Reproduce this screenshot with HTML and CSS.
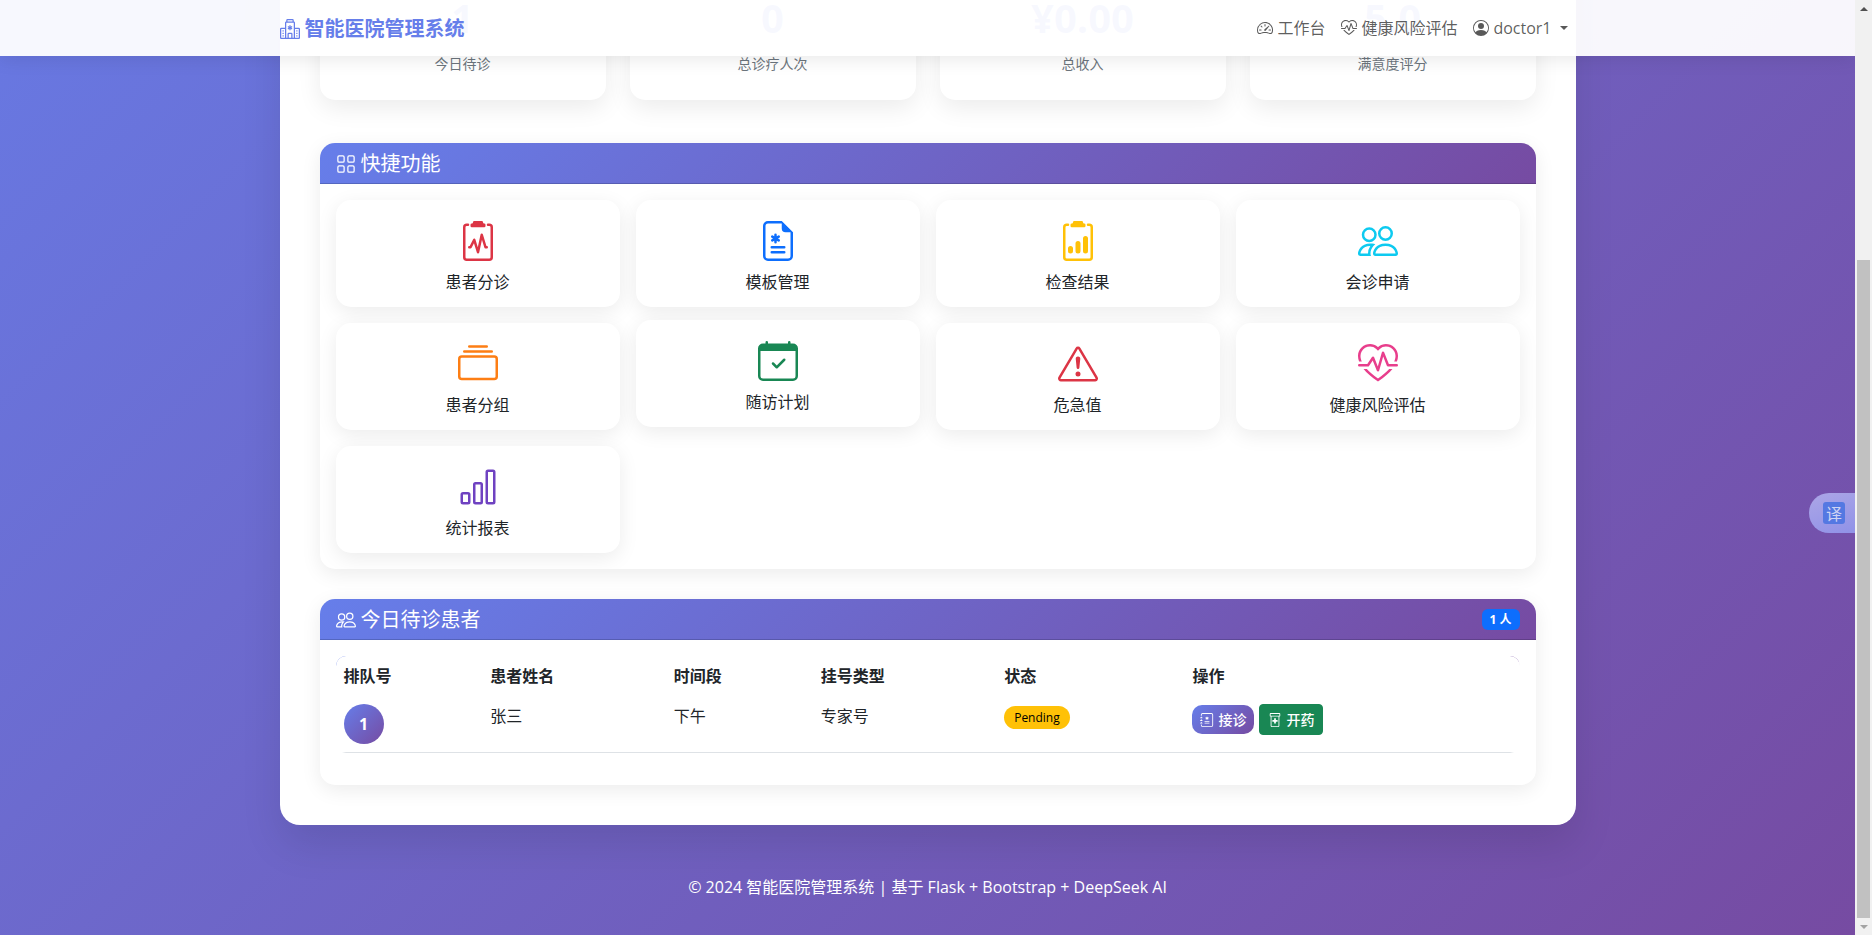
FILE: index.html
```
<!DOCTYPE html>
<html lang="zh-CN">
<head>
    <meta charset="UTF-8">
    <meta name="viewport" content="width=device-width, initial-scale=1.0">
    <title>医生工作台 - 智能医院管理系统</title>
    <link rel="stylesheet" href="styles.css">
</head>
<body>
    <!-- 重复使用的图标 -->
    <svg class="icon-defs" aria-hidden="true">
        <symbol id="icon-people" viewBox="0 0 16 16">
            <path d="M15 14s1 0 1-1-1-4-5-4-5 3-5 4 1 1 1 1zm-7.978-1L7 12.996c.001-.264.167-1.03.76-1.72C8.312 10.629 9.282 10 11 10c1.717 0 2.687.63 3.24 1.276.593.69.758 1.457.76 1.72l-.008.002-.014.002zM11 7a2 2 0 1 0 0-4 2 2 0 0 0 0 4m3-2a3 3 0 1 1-6 0 3 3 0 0 1 6 0M6.936 9.28a6 6 0 0 0-1.23-.247A7 7 0 0 0 5 9c-4 0-5 3-5 4q0 1 1 1h4.216A2.24 2.24 0 0 1 5 13c0-1.01.377-2.042 1.09-2.904.243-.294.526-.569.846-.816M4.92 10A5.5 5.5 0 0 0 4 13H1c0-.26.164-1.03.76-1.724.545-.636 1.492-1.256 3.16-1.275ZM1.5 5.5a3 3 0 1 1 6 0 3 3 0 0 1-6 0m3-2a2 2 0 1 0 0 4 2 2 0 0 0 0-4"/>
        </symbol>
        <symbol id="icon-heart-pulse" viewBox="0 0 16 16">
            <path d="m8 2.748-.717-.737C5.6.281 2.514.878 1.4 3.053.918 3.995.78 5.323 1.508 7H.43c-2.128-5.697 4.165-8.83 7.394-5.857q.09.083.176.171a3 3 0 0 1 .176-.17c3.23-2.974 9.522.159 7.394 5.856h-1.078c.728-1.677.59-3.005.108-3.947C13.486.878 10.4.28 8.717 2.01zM2.212 10h1.315C4.593 11.183 6.05 12.458 8 13.795c1.949-1.337 3.407-2.612 4.473-3.795h1.315c-1.265 1.566-3.14 3.25-5.788 5-2.648-1.75-4.523-3.434-5.788-5"/>
            <path d="M10.464 3.314a.5.5 0 0 0-.945.049L7.921 8.956 6.464 5.314a.5.5 0 0 0-.88-.091L3.732 8H.5a.5.5 0 0 0 0 1H4a.5.5 0 0 0 .416-.223l1.473-2.209 1.647 4.118a.5.5 0 0 0 .945-.049l1.598-5.593 1.457 3.642A.5.5 0 0 0 12 9h3.5a.5.5 0 0 0 0-1h-3.162z"/>
        </symbol>
        <symbol id="icon-clipboard" viewBox="0 0 16 16">
            <path d="M9.5 0a.5.5 0 0 1 .5.5.5.5 0 0 0 .5.5.5.5 0 0 1 .5.5V2a.5.5 0 0 1-.5.5h-5A.5.5 0 0 1 5 2v-.5a.5.5 0 0 1 .5-.5.5.5 0 0 0 .5-.5.5.5 0 0 1 .5-.5z"/>
            <path d="M3 2.5a.5.5 0 0 1 .5-.5H4a.5.5 0 0 0 0-1h-.5A1.5 1.5 0 0 0 2 2.5v12A1.5 1.5 0 0 0 3.5 16h9a1.5 1.5 0 0 0 1.5-1.5v-12A1.5 1.5 0 0 0 12.5 1H12a.5.5 0 0 0 0 1h.5a.5.5 0 0 1 .5.5v12a.5.5 0 0 1-.5.5h-9a.5.5 0 0 1-.5-.5z"/>
        </symbol>
    </svg>

    <div class="viewport">
        <nav class="navbar">
            <div class="container navbar-inner">
                <a class="navbar-brand" href="#">
                    <svg class="icon" viewBox="0 0 16 16"><path d="M8.5 5.034v1.1l.953-.55.5.867L9 7l.953.55-.5.866-.953-.55v1.1h-1v-1.1l-.953.55-.5-.866L7 7l-.953-.55.5-.866.953.55v-1.1zM13.25 9a.25.25 0 0 0-.25.25v.5c0 .138.112.25.25.25h.5a.25.25 0 0 0 .25-.25v-.5a.25.25 0 0 0-.25-.25zM13 11.25a.25.25 0 0 1 .25-.25h.5a.25.25 0 0 1 .25.25v.5a.25.25 0 0 1-.25.25h-.5a.25.25 0 0 1-.25-.25zm.25 1.75a.25.25 0 0 0-.25.25v.5c0 .138.112.25.25.25h.5a.25.25 0 0 0 .25-.25v-.5a.25.25 0 0 0-.25-.25zm-11-4a.25.25 0 0 0-.25.25v.5c0 .138.112.25.25.25h.5A.25.25 0 0 0 3 9.75v-.5A.25.25 0 0 0 2.75 9zm0 2a.25.25 0 0 0-.25.25v.5c0 .138.112.25.25.25h.5a.25.25 0 0 0 .25-.25v-.5a.25.25 0 0 0-.25-.25zM2 13.25a.25.25 0 0 1 .25-.25h.5a.25.25 0 0 1 .25.25v.5a.25.25 0 0 1-.25.25h-.5a.25.25 0 0 1-.25-.25z"/><path d="M5 1a1 1 0 0 1 1-1h4a1 1 0 0 1 1 1v1a1 1 0 0 1 1 1v4h3a1 1 0 0 1 1 1v7a1 1 0 0 1-1 1H1a1 1 0 0 1-1-1V8a1 1 0 0 1 1-1h3V3a1 1 0 0 1 1-1zm2 14h2v-3H7zm3 0h1V3H5v12h1v-3a1 1 0 0 1 1-1h2a1 1 0 0 1 1 1zm0-14H6v1h4zm2 7v7h3V8zm-8 7V8H1v7z"/></svg>
                    智能医院管理系统
                </a>
                <div class="navbar-nav">
                    <a class="nav-link" href="#">
                        <svg class="icon" viewBox="0 0 16 16"><path d="M8 4a.5.5 0 0 1 .5.5V6a.5.5 0 0 1-1 0V4.5A.5.5 0 0 1 8 4M3.732 5.732a.5.5 0 0 1 .707 0l.915.914a.5.5 0 1 1-.708.708l-.914-.915a.5.5 0 0 1 0-.707M2 10a.5.5 0 0 1 .5-.5h1.586a.5.5 0 0 1 0 1H2.5A.5.5 0 0 1 2 10m9.5 0a.5.5 0 0 1 .5-.5h1.5a.5.5 0 0 1 0 1H12a.5.5 0 0 1-.5-.5m.754-4.246a.39.39 0 0 0-.527-.02L7.547 9.31a.91.91 0 1 0 1.302 1.258l3.434-4.297a.39.39 0 0 0-.029-.518z"/><path fill-rule="evenodd" d="M0 10a8 8 0 1 1 15.547 2.661c-.442 1.253-1.845 1.602-2.932 1.25C11.309 13.488 9.475 13 8 13c-1.474 0-3.31.488-4.615.911-1.087.352-2.49.003-2.932-1.25A8 8 0 0 1 0 10m8-7a7 7 0 0 0-6.603 9.329c.203.575.923.876 1.68.63C4.397 12.533 6.358 12 8 12s3.604.532 4.923.96c.757.245 1.477-.056 1.68-.631A7 7 0 0 0 8 3"/></svg>
                        工作台
                    </a>
                    <a class="nav-link" href="#">
                        <svg class="icon"><use href="#icon-heart-pulse"/></svg>
                        健康风险评估
                    </a>
                    <a class="nav-link dropdown-toggle" href="#">
                        <svg class="icon" viewBox="0 0 16 16"><path d="M11 6a3 3 0 1 1-6 0 3 3 0 0 1 6 0"/><path fill-rule="evenodd" d="M0 8a8 8 0 1 1 16 0A8 8 0 0 1 0 8m8-7a7 7 0 0 0-5.468 11.37C3.242 11.226 4.805 10 8 10s4.757 1.225 5.468 2.37A7 7 0 0 0 8 1"/></svg>
                        doctor1
                    </a>
                </div>
            </div>
        </nav>

        <main class="container main-container">
            <div class="stats">
                <div class="stat-card">
                    <div class="stat-number">1</div>
                    <div class="stat-label">今日待诊</div>
                </div>
                <div class="stat-card">
                    <div class="stat-number">0</div>
                    <div class="stat-label">总诊疗人次</div>
                </div>
                <div class="stat-card">
                    <div class="stat-number">¥0.00</div>
                    <div class="stat-label">总收入</div>
                </div>
                <div class="stat-card">
                    <div class="stat-number">5.0</div>
                    <div class="stat-label">满意度评分</div>
                </div>
            </div>

            <section class="card">
                <div class="card-header">
                    <h5>
                        <svg class="icon" viewBox="0 0 16 16"><path d="M1 2.5A1.5 1.5 0 0 1 2.5 1h3A1.5 1.5 0 0 1 7 2.5v3A1.5 1.5 0 0 1 5.5 7h-3A1.5 1.5 0 0 1 1 5.5zM2.5 2a.5.5 0 0 0-.5.5v3a.5.5 0 0 0 .5.5h3a.5.5 0 0 0 .5-.5v-3a.5.5 0 0 0-.5-.5zm6.5.5A1.5 1.5 0 0 1 10.5 1h3A1.5 1.5 0 0 1 15 2.5v3A1.5 1.5 0 0 1 13.5 7h-3A1.5 1.5 0 0 1 9 5.5zm1.5-.5a.5.5 0 0 0-.5.5v3a.5.5 0 0 0 .5.5h3a.5.5 0 0 0 .5-.5v-3a.5.5 0 0 0-.5-.5zM1 10.5A1.5 1.5 0 0 1 2.5 9h3A1.5 1.5 0 0 1 7 10.5v3A1.5 1.5 0 0 1 5.5 15h-3A1.5 1.5 0 0 1 1 13.5zm1.5-.5a.5.5 0 0 0-.5.5v3a.5.5 0 0 0 .5.5h3a.5.5 0 0 0 .5-.5v-3a.5.5 0 0 0-.5-.5zm6.5.5A1.5 1.5 0 0 1 10.5 9h3a1.5 1.5 0 0 1 1.5 1.5v3a1.5 1.5 0 0 1-1.5 1.5h-3A1.5 1.5 0 0 1 9 13.5zm1.5-.5a.5.5 0 0 0-.5.5v3a.5.5 0 0 0 .5.5h3a.5.5 0 0 0 .5-.5v-3a.5.5 0 0 0-.5-.5z"/></svg>
                        快捷功能
                    </h5>
                </div>
                <div class="card-body quick-grid">
                    <a class="quick-card" href="#">
                        <svg class="quick-icon red" viewBox="0 0 16 16"><use href="#icon-clipboard"/><path d="M9.979 5.356a.5.5 0 0 0-.968.04L7.92 10.49l-.94-3.135a.5.5 0 0 0-.926-.08L4.69 10H4.5a.5.5 0 0 0 0 1H5a.5.5 0 0 0 .447-.276l.936-1.873 1.138 3.793a.5.5 0 0 0 .968-.04L9.58 7.51l.94 3.135A.5.5 0 0 0 11 11h.5a.5.5 0 0 0 0-1h-.128z"/></svg>
                        <span>患者分诊</span>
                    </a>
                    <a class="quick-card" href="#">
                        <svg class="quick-icon blue" viewBox="0 0 16 16"><path d="M7.5 5.5a.5.5 0 0 0-1 0v.634l-.549-.317a.5.5 0 1 0-.5.866L6 7l-.549.317a.5.5 0 1 0 .5.866l.549-.317V8.5a.5.5 0 1 0 1 0v-.634l.549.317a.5.5 0 1 0 .5-.866L8 7l.549-.317a.5.5 0 1 0-.5-.866l-.549.317zm-2 4.5a.5.5 0 0 0 0 1h5a.5.5 0 0 0 0-1zm0 2a.5.5 0 0 0 0 1h5a.5.5 0 0 0 0-1z"/><path d="M14 14V4.5L9.5 0H4a2 2 0 0 0-2 2v12a2 2 0 0 0 2 2h8a2 2 0 0 0 2-2M9.5 3A1.5 1.5 0 0 0 11 4.5h2V14a1 1 0 0 1-1 1H4a1 1 0 0 1-1-1V2a1 1 0 0 1 1-1h5.5z"/></svg>
                        <span>模板管理</span>
                    </a>
                    <a class="quick-card" href="#">
                        <svg class="quick-icon yellow" viewBox="0 0 16 16"><use href="#icon-clipboard"/><path d="M10 7a1 1 0 1 1 2 0v5a1 1 0 1 1-2 0zm-6 4a1 1 0 1 1 2 0v1a1 1 0 1 1-2 0zm4-3a1 1 0 0 0-1 1v3a1 1 0 1 0 2 0V9a1 1 0 0 0-1-1"/></svg>
                        <span>检查结果</span>
                    </a>
                    <a class="quick-card" href="#">
                        <svg class="quick-icon cyan"><use href="#icon-people"/></svg>
                        <span>会诊申请</span>
                    </a>
                    <a class="quick-card" href="#">
                        <svg class="quick-icon orange" viewBox="0 0 16 16"><path d="M2.5 3.5a.5.5 0 0 1 0-1h11a.5.5 0 0 1 0 1zm2-2a.5.5 0 0 1 0-1h7a.5.5 0 0 1 0 1zM0 13a1.5 1.5 0 0 0 1.5 1.5h13A1.5 1.5 0 0 0 16 13V6a1.5 1.5 0 0 0-1.5-1.5h-13A1.5 1.5 0 0 0 0 6zm1.5.5A.5.5 0 0 1 1 13V6a.5.5 0 0 1 .5-.5h13a.5.5 0 0 1 .5.5v7a.5.5 0 0 1-.5.5z"/></svg>
                        <span>患者分组</span>
                    </a>
                    <a class="quick-card hover" href="#">
                        <svg class="quick-icon green" viewBox="0 0 16 16"><path d="M10.854 7.146a.5.5 0 0 1 0 .708l-3 3a.5.5 0 0 1-.708 0l-1.5-1.5a.5.5 0 1 1 .708-.708L7.5 9.793l2.646-2.647a.5.5 0 0 1 .708 0"/><path d="M3.5 0a.5.5 0 0 1 .5.5V1h8V.5a.5.5 0 0 1 1 0V1h1a2 2 0 0 1 2 2v11a2 2 0 0 1-2 2H2a2 2 0 0 1-2-2V3a2 2 0 0 1 2-2h1V.5a.5.5 0 0 1 .5-.5M1 4v10a1 1 0 0 0 1 1h12a1 1 0 0 0 1-1V4z"/></svg>
                        <span>随访计划</span>
                    </a>
                    <a class="quick-card" href="#">
                        <svg class="quick-icon red" viewBox="0 0 16 16"><path d="M7.938 2.016A.13.13 0 0 1 8.002 2a.13.13 0 0 1 .063.016.15.15 0 0 1 .054.057l6.857 11.667c.036.06.035.124.002.183a.2.2 0 0 1-.054.06.1.1 0 0 1-.066.017H1.146a.1.1 0 0 1-.066-.017.2.2 0 0 1-.054-.06.18.18 0 0 1 .002-.183L7.884 2.073a.15.15 0 0 1 .054-.057m1.044-.45a1.13 1.13 0 0 0-1.96 0L.165 13.233c-.457.778.091 1.767.98 1.767h13.713c.889 0 1.438-.99.98-1.767z"/><path d="M7.002 12a1 1 0 1 1 2 0 1 1 0 0 1-2 0M7.1 5.995a.905.905 0 1 1 1.8 0l-.35 3.507a.552.552 0 0 1-1.1 0z"/></svg>
                        <span>危急值</span>
                    </a>
                    <a class="quick-card" href="#">
                        <svg class="quick-icon pink"><use href="#icon-heart-pulse"/></svg>
                        <span>健康风险评估</span>
                    </a>
                    <a class="quick-card" href="#">
                        <svg class="quick-icon purple" viewBox="0 0 16 16"><path d="M4 11H2v3h2zm5-4H7v7h2zm5-5v12h-2V2zm-2-1a1 1 0 0 0-1 1v12a1 1 0 0 0 1 1h2a1 1 0 0 0 1-1V2a1 1 0 0 0-1-1zM6 7a1 1 0 0 1 1-1h2a1 1 0 0 1 1 1v7a1 1 0 0 1-1 1H7a1 1 0 0 1-1-1zm-5 4a1 1 0 0 1 1-1h2a1 1 0 0 1 1 1v3a1 1 0 0 1-1 1H2a1 1 0 0 1-1-1z"/></svg>
                        <span>统计报表</span>
                    </a>
                </div>
            </section>

            <section class="card">
                <div class="card-header">
                    <h5>
                        <svg class="icon"><use href="#icon-people"/></svg>
                        今日待诊患者
                    </h5>
                    <span class="badge">1 人</span>
                </div>
                <div class="card-body">
                    <table class="table">
                        <colgroup>
                            <col class="col-narrow">
                            <col class="col-wide">
                            <col class="col-narrow">
                            <col class="col-wide">
                            <col class="col-status">
                            <col>
                        </colgroup>
                        <thead>
                            <tr>
                                <th>排队号</th>
                                <th>患者姓名</th>
                                <th>时间段</th>
                                <th>挂号类型</th>
                                <th>状态</th>
                                <th>操作</th>
                            </tr>
                        </thead>
                        <tbody>
                            <tr>
                                <td><div class="queue-number">1</div></td>
                                <td>张三</td>
                                <td>下午</td>
                                <td>专家号</td>
                                <td><span class="status-badge">Pending</span></td>
                                <td>
                                    <div class="actions">
                                        <button type="button" class="btn btn-primary">
                                            <svg class="icon" viewBox="0 0 16 16"><path d="M8 4a.5.5 0 0 1 .5.5v.634l.549-.317a.5.5 0 1 1 .5.866L9 6l.549.317a.5.5 0 1 1-.5.866L8.5 6.866V7.5a.5.5 0 0 1-1 0v-.634l-.549.317a.5.5 0 1 1-.5-.866L7 6l-.549-.317a.5.5 0 0 1 .5-.866l.549.317V4.5A.5.5 0 0 1 8 4M5 9.5a.5.5 0 0 1 .5-.5h5a.5.5 0 0 1 0 1h-5a.5.5 0 0 1-.5-.5m0 2a.5.5 0 0 1 .5-.5h5a.5.5 0 0 1 0 1h-5a.5.5 0 0 1-.5-.5"/><path d="M3 0h10a2 2 0 0 1 2 2v12a2 2 0 0 1-2 2H3a2 2 0 0 1-2-2v-1h1v1a1 1 0 0 0 1 1h10a1 1 0 0 0 1-1V2a1 1 0 0 0-1-1H3a1 1 0 0 0-1 1v1H1V2a2 2 0 0 1 2-2"/><path d="M1 5v-.5a.5.5 0 0 1 1 0V5h.5a.5.5 0 0 1 0 1h-2a.5.5 0 0 1 0-1zm0 3v-.5a.5.5 0 0 1 1 0V8h.5a.5.5 0 0 1 0 1h-2a.5.5 0 0 1 0-1zm0 3v-.5a.5.5 0 0 1 1 0v.5h.5a.5.5 0 0 1 0 1h-2a.5.5 0 0 1 0-1z"/></svg>
                                            接诊
                                        </button>
                                        <button type="button" class="btn btn-success">
                                            <svg class="icon" viewBox="0 0 16 16"><path d="M7 6h2v2h2v2H9v2H7v-2H5V8h2z"/><path d="M2 1a1 1 0 0 1 1-1h10a1 1 0 0 1 1 1v2a1 1 0 0 1-1 1v10.5a1.5 1.5 0 0 1-1.5 1.5h-7A1.5 1.5 0 0 1 3 14.5V4a1 1 0 0 1-1-1zm2 3v10.5a.5.5 0 0 0 .5.5h7a.5.5 0 0 0 .5-.5V4zM3 3h10V1H3z"/></svg>
                                            开药
                                        </button>
                                    </div>
                                </td>
                            </tr>
                        </tbody>
                    </table>
                </div>
            </section>
        </main>

        <footer class="footer">
            <p>© 2024 智能医院管理系统 | 基于 Flask + Bootstrap + DeepSeek AI</p>
        </footer>

        <button type="button" class="translate-btn"><span>译</span></button>
    </div>

    <div class="scrollbar" aria-hidden="true">
        <div class="scroll-arrow up"></div>
        <div class="scroll-track">
            <div class="scroll-thumb"></div>
        </div>
        <div class="scroll-arrow down"></div>
    </div>
</body>
</html>
```
FILE: styles.css
```
* {
    box-sizing: border-box;
}
body {
    margin: 0;
    height: 100vh;
    display: flex;
    overflow: hidden;
    font-family: "Open Sans", "Noto Sans CJK SC", sans-serif;
    font-size: 16px;
    line-height: 24px;
    color: #212529;
}
a {
    color: inherit;
    text-decoration: none;
}
.icon-defs {
    display: none;
}
.icon {
    width: 1em;
    height: 1em;
    fill: currentColor;
    flex: none;
}

/* 页面区域，停在底部 */
.viewport {
    position: relative;
    flex: 1;
    min-width: 0;
    display: flex;
    flex-direction: column;
    justify-content: flex-end;
    overflow: hidden;
    background: linear-gradient(135deg, #667eea 0%, #764ba2 100%) bottom / 100% 137vh;
}
.container {
    width: calc(100% - 24px);
    max-width: 1296px;
    margin: 0 auto;
}

/* 导航栏 */
.navbar {
    position: absolute;
    top: 0;
    left: 0;
    right: 0;
    z-index: 10;
    background: rgba(255, 255, 255, 0.95);
    box-shadow: 0 2px 20px rgba(0, 0, 0, 0.1);
}
.navbar-inner {
    height: 56px;
    display: flex;
    align-items: center;
    justify-content: space-between;
}
.navbar-brand {
    display: flex;
    align-items: center;
    gap: 5px;
    padding-top: 2px;
    font-size: 20px;
    font-weight: bold;
    color: #667eea;
}
.navbar-nav {
    display: flex;
}
.nav-link {
    display: flex;
    align-items: center;
    gap: 4px;
    padding: 8px;
    color: rgba(0, 0, 0, 0.65);
}
.dropdown-toggle::after {
    content: "";
    margin-left: 4px;
    border-top: 4px solid;
    border-left: 4px solid transparent;
    border-right: 4px solid transparent;
}

/* 主内容 */
.main-container {
    flex: none;
    margin-bottom: 30px;
    padding: 40px;
    background: #fff;
    border-radius: 20px;
    box-shadow: 0 20px 40px rgba(0, 0, 0, 0.1);
}
.stats {
    display: grid;
    grid-template-columns: repeat(4, 1fr);
    gap: 24px;
    margin-bottom: 43px;
}
.stat-card {
    padding: 24px;
    text-align: center;
    background: #fff;
    border-radius: 15px;
    box-shadow: 0 8px 25px rgba(0, 0, 0, 0.08);
}
.stat-number {
    margin-bottom: 16px;
    font-size: 40px;
    line-height: 36px;
    font-weight: bold;
    color: #667eea;
}
.stat-label {
    font-size: 14px;
    color: #6c757d;
}

.card {
    background: #fff;
    border-radius: 15px;
    box-shadow: 0 5px 20px rgba(0, 0, 0, 0.08);
    overflow: hidden;
}
.card + .card {
    margin-top: 30px;
}
.card-header {
    display: flex;
    align-items: center;
    justify-content: space-between;
    padding: 8px 16px;
    color: #fff;
    background: linear-gradient(135deg, #667eea 0%, #764ba2 100%);
    border-bottom: 1px solid rgba(0, 0, 0, 0.175);
}
.card-header h5 {
    display: flex;
    align-items: center;
    gap: 5px;
    margin: 0;
    padding-top: 2px;
    font-size: 20px;
    line-height: 22px;
    font-weight: normal;
}
.card-body {
    padding: 16px;
}

/* 快捷功能 */
.quick-grid {
    display: grid;
    grid-template-columns: repeat(4, 1fr);
    gap: 16px;
}
.quick-card {
    display: flex;
    flex-direction: column;
    align-items: center;
    gap: 12px;
    padding: 21px 20px 15px;
    line-height: 19px;
    background: #fff;
    border-radius: 15px;
    box-shadow: 0 5px 20px rgba(0, 0, 0, 0.08);
}
.quick-card:hover,
.quick-card.hover {
    transform: translateY(-3px);
}
.quick-icon {
    width: 40px;
    height: 40px;
    fill: currentColor;
}
.red { color: #dc3545; }
.blue { color: #0d6efd; }
.yellow { color: #ffc107; }
.cyan { color: #0dcaf0; }
.orange { color: #fd7e14; }
.green { color: #198754; }
.pink { color: #e83e8c; }
.purple { color: #6f42c1; }

/* 待诊患者 */
.badge {
    padding: 4px 8px;
    font-size: 12px;
    line-height: 13px;
    font-weight: bold;
    background: #0d6efd;
    border-radius: 6px;
}
.table {
    width: 100%;
    margin-bottom: 16px;
    table-layout: fixed;
    border-collapse: collapse;
    border-radius: 10px;
    overflow: hidden;
}
.col-narrow { width: 12.4%; }
.col-wide { width: 15.5%; }
.col-status { width: 15.9%; }
.table thead {
    background: linear-gradient(135deg, #667eea 0%, #764ba2 100%);
}
.table th,
.table td {
    padding: 8px;
    text-align: left;
    vertical-align: top;
    background: #fff;
}
.table td {
    border-bottom: 1px solid #dee2e6;
}
.queue-number {
    width: 40px;
    height: 40px;
    display: flex;
    align-items: center;
    justify-content: center;
    font-weight: bold;
    color: #fff;
    background: linear-gradient(135deg, #667eea 0%, #764ba2 100%);
    border-radius: 50%;
}
.status-badge {
    display: inline-block;
    padding: 5px 10px;
    font-size: 12px;
    line-height: 13px;
    color: #000;
    background: #ffc107;
    border-radius: 20px;
}
.actions {
    display: flex;
    align-items: center;
    gap: 5px;
}
.btn {
    display: flex;
    align-items: center;
    gap: 4px;
    padding: 4px 8px;
    font-family: inherit;
    font-size: 14px;
    line-height: 21px;
    font-weight: 500;
    color: #fff;
    cursor: pointer;
}
.btn-primary {
    border: none;
    border-radius: 10px;
    background: linear-gradient(135deg, #667eea 0%, #764ba2 100%);
}
.btn-success {
    border: 1px solid #198754;
    border-radius: 4px;
    background: #198754;
}

/* 页脚 */
.footer {
    flex: none;
    padding: 20px 0;
    text-align: center;
    color: #fff;
}
.footer p {
    margin: 0 0 16px;
}

/* 翻译浮动按钮 */
.translate-btn {
    position: absolute;
    right: 0;
    top: 493px;
    display: flex;
    align-items: center;
    padding: 9px 10px 9px 14px;
    border: none;
    border-radius: 20px 0 0 20px;
    background: linear-gradient(160deg, #aca6e6, #9092e8);
    cursor: pointer;
}
.translate-btn span {
    width: 22px;
    height: 22px;
    font-family: "Noto Sans CJK SC", sans-serif;
    font-size: 16px;
    line-height: 22px;
    color: #cfd3f3;
    background: #5478e2;
    border-radius: 3px;
}

/* 滚动条 */
.scrollbar {
    flex: none;
    width: 17px;
    display: flex;
    flex-direction: column;
    background: #f1f1f1;
}
.scroll-arrow {
    height: 17px;
    display: flex;
    align-items: center;
    justify-content: center;
}
.scroll-arrow::before {
    content: "";
    border-left: 4px solid transparent;
    border-right: 4px solid transparent;
}
.scroll-arrow.up::before {
    border-bottom: 4px solid #505050;
}
.scroll-arrow.down::before {
    border-top: 4px solid #a3a3a3;
}
.scroll-track {
    flex: 1;
    display: flex;
    flex-direction: column;
    justify-content: flex-end;
    padding: 0 2px;
}
.scroll-thumb {
    height: 73%;
    background: #c1c1c1;
}
```
